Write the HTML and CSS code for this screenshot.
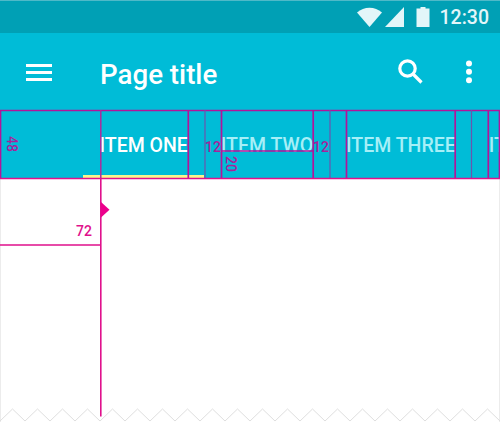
FILE: index.html
```html
<!DOCTYPE html>
<html lang="en">
<head>
    <meta charset="UTF-8">
    <meta name="viewport" content="width=device-width, initial-scale=1.0">
    <title>Page title</title>
    <link rel="stylesheet" href="styles.css">
</head>
<body>
    <div class="screen">
        <div class="status-bar">
            <svg class="status-icons" width="73" height="20" viewBox="0 0 73 20">
                <path d="M0 5.500C7-1 18-1 25 5.500L12.500 20z"/>
                <path d="M47 0v20H28z"/>
                <path d="M59.500 1.500h4v-1.500h5v1.500h4v18.500h-13z"/>
            </svg>
            <span class="clock">12:30</span>
        </div>

        <header class="toolbar">
            <svg class="menu-icon" width="26" height="18" viewBox="0 0 26 18">
                <path d="M0 0h26v3H0zM0 7h26v3H0zM0 14h26v3H0z"/>
            </svg>
            <h1>Page title</h1>
            <svg class="search-icon" width="26" height="26" viewBox="0 0 26 26">
                <circle cx="9.500" cy="9.500" r="7.700"/>
                <path d="M15 15l8.500 8.500"/>
            </svg>
            <svg class="more-icon" width="8" height="24" viewBox="0 0 8 24">
                <circle cx="4" cy="3.500" r="3"/>
                <circle cx="4" cy="11.800" r="3"/>
                <circle cx="4" cy="20.200" r="3"/>
            </svg>
        </header>

        <nav class="tabs">
            <div class="tab active">ITEM ONE</div>
            <div class="tab">ITEM TWO</div>
            <div class="tab">ITEM THREE</div>
            <div class="tab">IT</div>
        </nav>

        <main class="content">
            <!-- torn bottom edge -->
            <svg class="torn-edge" width="500" height="14">
                <defs>
                    <pattern id="zigzag" width="25" height="14" patternUnits="userSpaceOnUse">
                        <path d="M-1 14L12.500 1L26 14"/>
                    </pattern>
                </defs>
                <rect width="500" height="14" fill="url(#zigzag)"/>
            </svg>
        </main>

        <!-- spacing guides -->
        <svg class="guides" width="500" height="422" viewBox="0 0 500 422">
            <g class="guide-box">
                <path d="M0 110.500H500M.5 110V179M188.300 110V179M221.500 110V179M313.200 110V179M346.500 110V179M455.200 110V179M488.300 110V179M499.500 110V179"/>
                <path d="M221 151H313"/>
            </g>
            <path class="guide-thin" d="M205 110V178M330 110V178M471.500 110V178"/>
            <path class="guide-over" d="M100.800 110V179"/>
            <path class="guide-line" d="M0 178.500H500M0 245H101M100.800 178V416.500"/>
            <path class="guide-arrow" d="M101 202l8.500 7.700l-8.500 7.700z"/>
        </svg>
        <span class="measure height-48">48</span>
        <span class="measure gap-one">12</span>
        <span class="measure gap-two">12</span>
        <span class="measure baseline-20">20</span>
        <span class="measure keyline-72">72</span>
    </div>
</body>
</html>
```

FILE: styles.css
```css
* {
    margin: 0;
    padding: 0;
    box-sizing: border-box;
}

body {
    font-family: Roboto, sans-serif;
    background: #fff;
    overflow: hidden;
}

.screen {
    position: relative;
    display: flex;
    flex-direction: column;
    width: 500px;
    height: 422px;
    overflow: hidden;
}

.status-bar {
    display: flex;
    justify-content: flex-end;
    align-items: center;
    height: 33px;
    padding-right: 11px;
    background: #00a0b5;
    border-top: 1px solid #4fb9c8;
    color: #e3f6f9;
}

.status-icons {
    margin-right: 10px;
    fill: #e3f6f9;
}

.clock {
    padding-top: 1px;
    font-size: 19.5px;
    font-weight: 500;
    line-height: 32px;
}

.toolbar {
    display: flex;
    align-items: center;
    height: 77px;
    padding: 0 27px 0 26px;
    background: #00bcd7;
    color: #fff;
}

.menu-icon {
    margin-top: 3px;
    fill: #fff;
}

.toolbar h1 {
    margin-left: 48px;
    margin-top: 5px;
    font-size: 27.7px;
    font-weight: 500;
}

.search-icon {
    margin-left: auto;
    margin-right: 41px;
    fill: none;
    stroke: #fff;
    stroke-width: 3.2;
}

.more-icon {
    margin-top: 1px;
    fill: #fff;
}

.tabs {
    display: flex;
    height: 69px;
    padding-left: 83px;
    background: #00bcd7;
    overflow: hidden;
}

.tab {
    flex: none;
    padding: 0 16.5px;
    font-size: 19.5px;
    font-weight: 500;
    line-height: 71px;
    color: #a6eff7;
    white-space: nowrap;
}

.tab.active {
    color: #fff;
    box-shadow: inset 0 -4px #f8f68c;
}

.content {
    display: flex;
    flex: 1;
    align-items: flex-end;
    border: 1px solid #ececec;
    border-width: 0 1px;
}

.torn-edge {
    flex: none;
    margin-left: -1px;
}

.torn-edge path {
    fill: none;
    stroke: #dedede;
}

.guides {
    position: absolute;
    top: 0;
    left: 0;
    fill: none;
}

.guide-box {
    stroke: #b3149a;
    stroke-width: 1.7;
}

.guide-thin {
    stroke: #6b55ad;
    stroke-width: 1.2;
}

.guide-over {
    stroke: #b02a9c;
    stroke-width: 1.5;
}

.guide-line {
    stroke: #e0108c;
    stroke-width: 1.6;
}

.guide-arrow {
    fill: #ec008c;
}

.measure {
    position: absolute;
    font-size: 14px;
    font-weight: 500;
    line-height: 16px;
    color: #a8229b;
}

.height-48 {
    top: 136px;
    left: 4px;
    writing-mode: vertical-rl;
}

.gap-one {
    top: 139px;
    left: 205px;
}

.gap-two {
    top: 139px;
    left: 313px;
}

.baseline-20 {
    top: 156px;
    left: 223px;
    writing-mode: vertical-rl;
}

.keyline-72 {
    top: 223px;
    left: 76px;
    color: #e0108c;
}
```
